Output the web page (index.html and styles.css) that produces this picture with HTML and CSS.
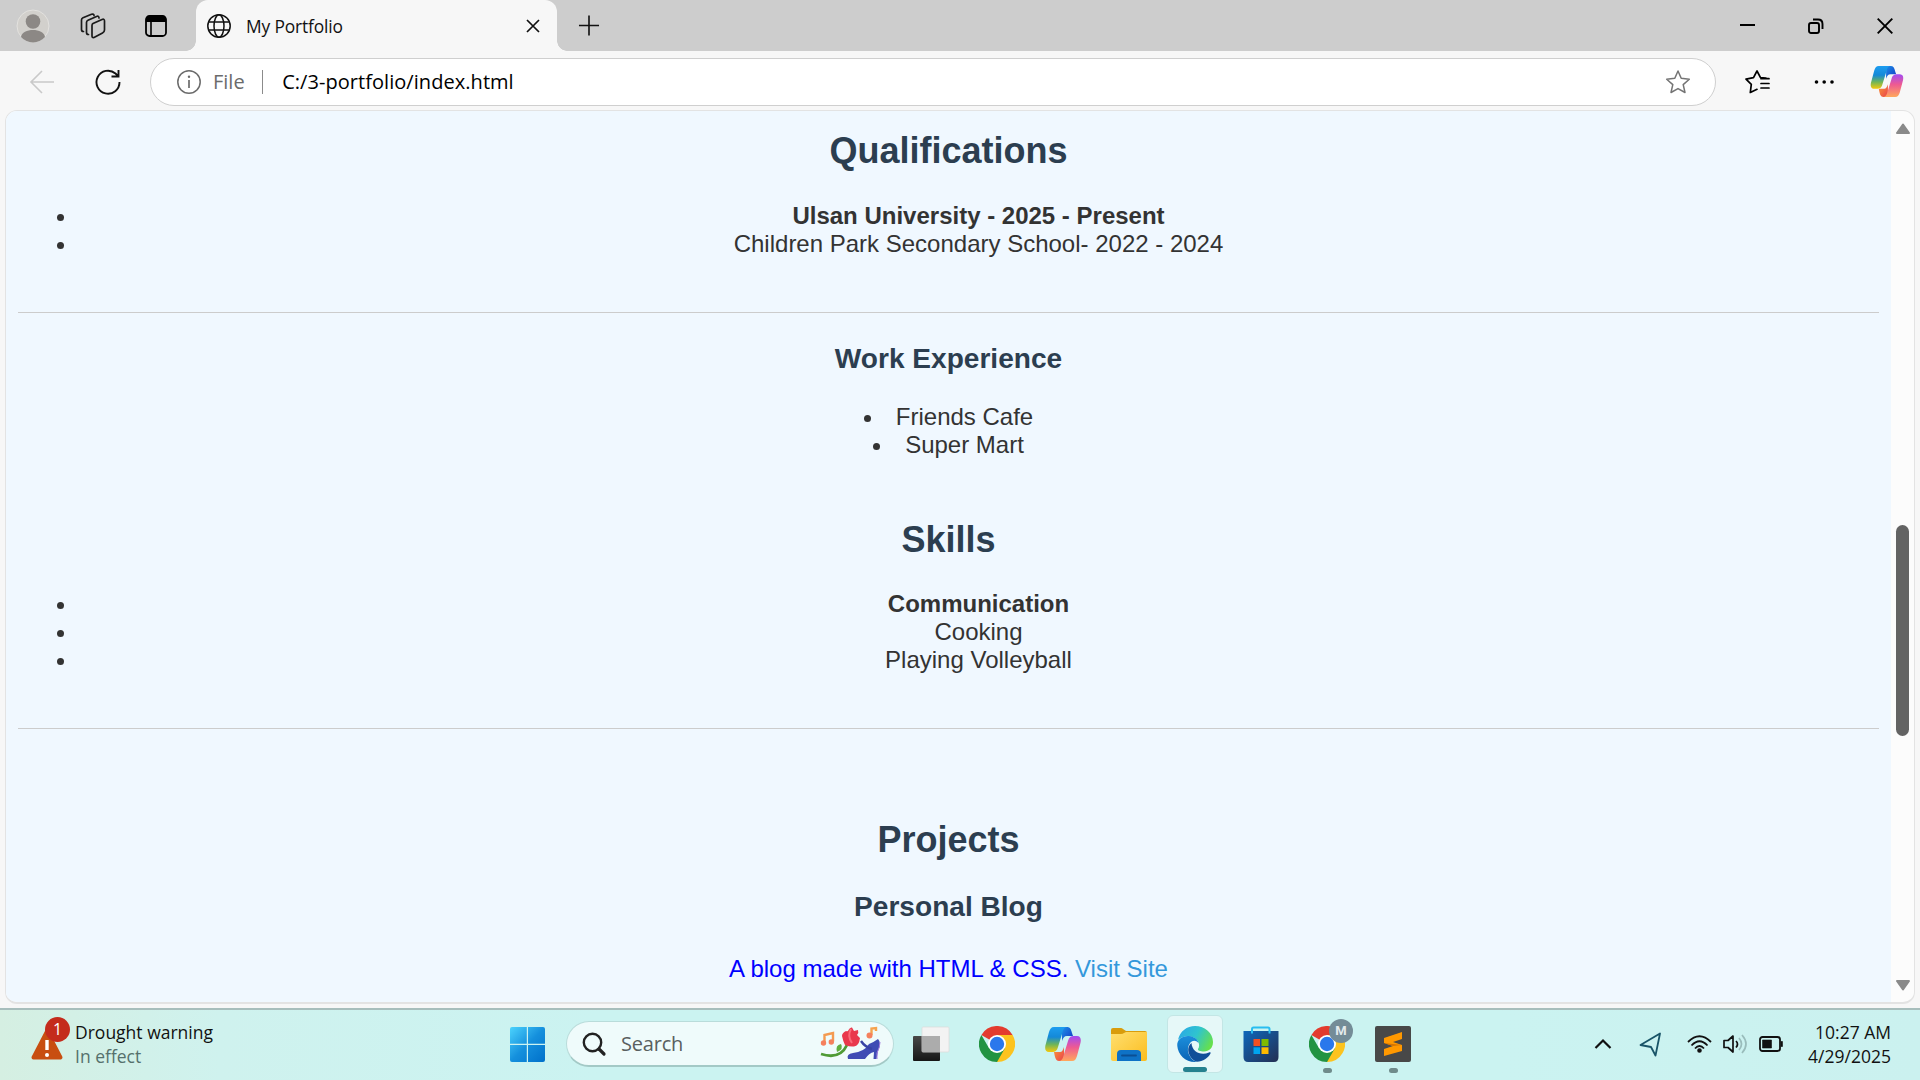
FILE: index.html
```html
<!DOCTYPE html>
<html lang="en">
<head>
<meta charset="utf-8">
<title>My Portfolio</title>
<link rel="stylesheet" href="styles.css">
</head>
<body>
<svg class="defs" width="0" height="0" aria-hidden="true">
  <defs>
    <linearGradient id="cpA" x1="0" y1="0" x2="0" y2="1"><stop offset="0" stop-color="#1d9df0"/><stop offset=".4" stop-color="#1489d8"/><stop offset=".7" stop-color="#6fb558"/><stop offset="1" stop-color="#f5c90c"/></linearGradient>
    <linearGradient id="cpB" x1="0" y1="0" x2="0" y2="1"><stop offset="0" stop-color="#a24bf3"/><stop offset=".45" stop-color="#ee5a92"/><stop offset="1" stop-color="#ffa85c"/></linearGradient>
    <linearGradient id="cpC" x1="0" y1="0" x2="1" y2="1"><stop offset="0" stop-color="#1b8fe8"/><stop offset="1" stop-color="#1437c4"/></linearGradient>
    <linearGradient id="cpD" x1="0" y1="0" x2="1" y2="1"><stop offset="0" stop-color="#fb9b35"/><stop offset="1" stop-color="#e9424d"/></linearGradient>
    <linearGradient id="win" x1="0" y1="0" x2="1" y2="1"><stop offset="0" stop-color="#4cd3fd"/><stop offset=".5" stop-color="#1590dd"/><stop offset="1" stop-color="#0070ca"/></linearGradient>
    <linearGradient id="fold" x1="0" y1="0" x2="1" y2="1"><stop offset="0" stop-color="#ffdf70"/><stop offset="1" stop-color="#fbbd1e"/></linearGradient>
    <linearGradient id="edgeTop" x1="0" y1=".2" x2="1" y2=".6"><stop offset="0" stop-color="#2aa8e6"/><stop offset=".5" stop-color="#2fc4cf"/><stop offset="1" stop-color="#66e04c"/></linearGradient>
    <linearGradient id="edgeMid" x1="0" y1="0" x2="0" y2="1"><stop offset="0" stop-color="#1b8fdc"/><stop offset="1" stop-color="#0a62b4"/></linearGradient>
    <linearGradient id="store" x1="0" y1="0" x2="1" y2="1"><stop offset="0" stop-color="#0d67bb"/><stop offset="1" stop-color="#242f52"/></linearGradient>
    <linearGradient id="tvA" x1="0" y1="0" x2="0" y2="1"><stop offset="0" stop-color="#484848"/><stop offset="1" stop-color="#161616"/></linearGradient>
    <symbol id="copilot" viewBox="0 0 36 34">
      <path d="M17 0H22C25 0 26 2 27 6L28 9H22C19 9 18 11 17 14Z" fill="url(#cpC)"/>
      <path d="M19 34H14C11 34 10 31 9 25H15C17 25 18 23 19 20Z" fill="url(#cpD)"/>
      <path d="M9 0H22C19 0 18 3 17 7L13 20C12 24 10 25 7 25H4C0 25-.5 21 .8 17L4 5C5 2 6 0 9 0Z" fill="url(#cpA)"/>
      <path d="M27 34H14C17 34 18 31 19 27L23 14C24 10 26 9 29 9H32C36 9 36.500 13 35.200 17L32 29C31 32 30 34 27 34Z" fill="url(#cpB)"/>
    </symbol>
    <symbol id="chrome" viewBox="0 0 36 36">
      <path d="M2.400 9A18 18 0 0 1 33.600 9L18 18Z" fill="#e33b2e"/>
      <path d="M33.600 9A18 18 0 0 1 18 36L18 18 18 9Z" fill="#fcc31e"/>
      <path d="M2.400 9A18 18 0 0 0 18 36L25.800 22.500 18 18 10.200 22.500Z" fill="#229342"/>
      <path d="M18 9H33.600L25.800 22.500Z" fill="#fcc31e"/>
      <circle cx="18" cy="18" r="9" fill="#fff"/><circle cx="18" cy="18" r="7.200" fill="#2a78ec"/>
    </symbol>
  </defs>
</svg>

<header class="tabbar">
  <svg class="avatar" width="34" height="34" viewBox="0 0 34 34"><circle cx="17" cy="17" r="16" fill="#d2d0cc" stroke="#e3e2df"/><circle cx="17" cy="12.500" r="7.300" fill="#8c8885"/><path d="M5 28C6 18.500 28 18.500 29 28A16 16 0 0 1 5 28Z" fill="#8c8885"/></svg>
  <svg class="spaces" width="26" height="26" viewBox="0 0 26 26" fill="none" stroke="#1a1a1a" stroke-width="1.700" stroke-linejoin="round" stroke-linecap="round"><path d="M13 10.500 22 6.500Q24.500 5.500 24.500 8V17Q24.500 19 22.500 20L14 24.500Q12 25 12 23V12.500Q12 11 13 10.500ZM8.500 21.500Q6.500 21.500 6.500 19.500V9.500Q6.500 8 8 7.300L16.500 3.500Q19 2.500 19 5M3.500 18.500Q1.500 18.500 1.500 16.500V7Q1.500 5.500 3 4.800L11.500 1.300Q14 .5 14 2.500"/></svg>
  <svg class="actions" width="22" height="22" viewBox="0 0 22 22"><rect x="1" y="1" width="20" height="20" rx="3.500" fill="none" stroke="#000" stroke-width="1.800"/><path d="M1 6V4Q1 1 4 1H18Q21 1 21 4V7H1Z"/><path d="M6 6V21" stroke="#000" stroke-width="1.600"/></svg>
  <div class="tab">
    <svg width="24" height="24" viewBox="0 0 24 24" fill="none" stroke="#111" stroke-width="1.500"><circle cx="12" cy="12" r="11.200"/><ellipse cx="12" cy="12" rx="5" ry="11.200"/><path d="M2 8H22M2 16H22"/></svg>
    <span class="tab-title">My Portfolio</span>
    <svg class="tab-close" width="14" height="14" viewBox="0 0 14 14"><path d="M1 1 13 13M13 1 1 13" stroke="#111" stroke-width="1.700"/></svg>
  </div>
  <svg class="new-tab" width="22" height="22" viewBox="0 0 22 22"><path d="M11 .5V21.500M.5 11H21.500" stroke="#111" stroke-width="1.700"/></svg>
  <div class="window-buttons">
    <svg width="15" height="16" viewBox="0 0 15 16"><path d="M0 7H15" stroke="#000" stroke-width="2"/></svg>
    <svg width="16" height="16" viewBox="0 0 16 16" fill="none" stroke="#000" stroke-width="1.900"><rect x="1" y="5" width="10" height="10" rx="2"/><path d="M5 1.500H10Q14.500 1.500 14.500 6V11"/></svg>
    <svg width="16" height="16" viewBox="0 0 16 16"><path d="M.7.7 15.300 15.300M15.300.7.7 15.300" stroke="#000" stroke-width="1.900"/></svg>
  </div>
</header>

<nav class="toolbar">
  <svg class="back" width="24" height="24" viewBox="0 0 24 24" fill="none" stroke="#c9c9c9" stroke-width="1.600"><path d="M24 12H1.500M12 1 1 12 12 23"/></svg>
  <svg class="reload" width="26" height="26" viewBox="0 0 26 26" fill="none" stroke="#111" stroke-width="1.900"><path d="M24.500 13A11.500 11.500 0 1 1 20.500 4.500L23 7M23.500 1V7.500H16.500"/></svg>
  <div class="address">
    <svg width="24" height="24" viewBox="0 0 24 24"><circle cx="12" cy="12" r="11.200" fill="none" stroke="#6b6b6b" stroke-width="1.500"/><path d="M12 10V18" stroke="#6b6b6b" stroke-width="1.700"/><circle cx="12" cy="6.800" r="1.200" fill="#6b6b6b"/></svg>
    <span class="scheme">File</span>
    <span class="divider"></span>
    <span class="url">C:/3-portfolio/index.html</span>
    <svg class="star" width="26" height="26" viewBox="0 0 26 26"><path d="M13 2 16.200 9.300 24.300 10.200 18.200 15.600 20 23.500 13 19.600 6 23.500 7.800 15.600 1.700 10.200 9.800 9.300Z" fill="none" stroke="#747474" stroke-width="1.500" stroke-linejoin="round"/></svg>
  </div>
  <svg class="favs" width="26" height="26" viewBox="0 0 26 26" fill="none" stroke="#000" stroke-width="1.700" stroke-linejoin="round" stroke-linecap="round"><path d="M22 9 16.500 8.700 13 2 9.500 8.700 2 10.100 7.300 15.300 6.300 23.500 13 20.300M17 9.700H25M17 14.500H25M17 19H25"/></svg>
  <svg class="more" width="20" height="6" viewBox="0 0 20 6"><circle cx="2.500" cy="3" r="1.800"/><circle cx="10.200" cy="3" r="1.800"/><circle cx="18" cy="3" r="1.800"/></svg>
  <svg class="copilot" width="34" height="31"><use href="#copilot"/></svg>
</nav>

<div class="frame">
  <main class="page">
    <section class="block">
      <h2>Qualifications</h2>
      <ul class="wide-list first">
        <li><span><b>Ulsan University - 2025 - Present</b></span></li>
        <li><span>Children Park Secondary School- 2022 - 2024</span></li>
      </ul>
    </section>
    <section class="work">
      <h3>Work Experience</h3>
      <ul class="inner-list">
        <li>Friends Cafe</li>
        <li>Super Mart</li>
      </ul>
    </section>
    <section class="block">
      <h2>Skills</h2>
      <ul class="wide-list">
        <li><span><b>Communication</b></span></li>
        <li><span>Cooking</span></li>
        <li><span>Playing Volleyball</span></li>
      </ul>
    </section>
    <section class="projects">
      <h2>Projects</h2>
      <h3>Personal Blog</h3>
      <p>A blog made with HTML &amp; CSS. <a href="#">Visit Site</a></p>
    </section>
  </main>
  <div class="scrollbar">
    <svg width="16" height="12" viewBox="0 0 16 12"><path d="M8 1.500 14 10H2Z" fill="#8a8a8a" stroke="#8a8a8a" stroke-width="2" stroke-linejoin="round"/></svg>
    <div class="thumb"></div>
    <svg width="16" height="12" viewBox="0 0 16 12"><path d="M8 10.500 14 2H2Z" fill="#8a8a8a" stroke="#8a8a8a" stroke-width="2" stroke-linejoin="round"/></svg>
  </div>
</div>

<footer class="taskbar">
  <div class="weather">
    <div class="warning">
      <svg width="32" height="31" viewBox="0 0 32 31"><path d="M16 2.500 29.500 28.500H2.500Z" fill="#c84e10" stroke="#c84e10" stroke-width="4" stroke-linejoin="round"/><path d="M16 11V21" stroke="#fff" stroke-width="3.400"/><circle cx="16" cy="26" r="2" fill="#fff"/></svg>
      <span class="count">1</span>
    </div>
    <div class="weather-text"><span>Drought warning</span><span class="sub">In effect</span></div>
  </div>
  <svg class="start" width="35" height="35" viewBox="0 0 35 35"><path d="M2 0H16.800V16.800H0V2Q0 0 2 0ZM18 0H33Q35 0 35 2V16.800H18ZM0 18H16.800V35H2Q0 35 0 33ZM18 18H35V33Q35 35 33 35H18Z" fill="url(#win)"/></svg>
  <div class="search">
    <svg width="24" height="24" viewBox="0 0 24 24" fill="none" stroke="#222"><circle cx="10.500" cy="10.500" r="8.700" stroke-width="2.400"/><path d="M17 17 22 22" stroke-width="3.200" stroke-linecap="round"/></svg>
    <span>Search</span>
    <svg class="doodle" width="62" height="34" viewBox="0 0 62 34">
      <path d="M4.500 16V8L13 6V14.500" fill="none" stroke="#f49a50" stroke-width="2.400"/><circle cx="3.500" cy="16" r="2.700" fill="#f5805d"/><circle cx="11.300" cy="15" r="2.700" fill="#f5805d"/>
      <path d="M1 27Q20 33 27 18" fill="none" stroke="#4f9b35" stroke-width="2.800"/><path d="M17 25Q15 18 21 17Q24 22 17 25Z" fill="#5fae3e"/>
      <path d="M22 9Q22 6 26 4 28 5 28.500 3 30 0 32 .5L34 4 38 3Q39 6 37 8L40 11Q39 19 34 19.500 30 20 25 18 23 14 22 9Z" fill="#e9384c"/><path d="M31 2Q27 9 32 16" stroke="#fb6a78" stroke-width="2" fill="none"/>
      <path d="M51.500 8V1.500L56 1V4" fill="none" stroke="#f6a24d" stroke-width="2.400"/><circle cx="49.500" cy="8.500" r="3" fill="#f5805d"/>
      <path d="M28 32Q26 27 33 26 44 25 49 17 54 15 58 12 62 16 58 24L56.500 32H53.500L54 25Q49 26 45 32Z" fill="#3f4bb4"/><path d="M41 14Q45 20 52 22" fill="none" stroke="#3843a4" stroke-width="2.400"/><path d="M60 15Q60 20 57 26V32" fill="none" stroke="#a37bdd" stroke-width="1"/>
    </svg>
  </div>
  <div class="apps">
    <div class="app"><svg width="36" height="36" viewBox="0 0 36 36"><rect y="10" width="27" height="25" rx="1" fill="url(#tvA)"/><rect x="9" y="1" width="27" height="25" rx="1" fill="#f3f3f3" stroke="#dcdcdc" stroke-width=".8"/><path d="M9 10H27V26H9Z" fill="#acacac"/></svg></div>
    <div class="app"><svg width="36" height="36"><use href="#chrome"/></svg></div>
    <div class="app"><svg width="36" height="34"><use href="#copilot"/></svg></div>
    <div class="app"><svg width="36" height="36" viewBox="0 0 36 36"><path d="M0 4Q0 2 2 2H10Q11 2 12 3L15 5H34Q36 5 36 7V14H0Z" fill="#d99c0c"/><path d="M0 8H10Q12 8 13 7L15 6H36V33Q36 35 34 35H2Q0 35 0 33Z" fill="url(#fold)"/><path d="M6 35V28Q6 24 10 24H26Q30 24 30 28V35Z" fill="#0e72c6"/><path d="M11 29.500H25" stroke="#0a4f94" stroke-width="1.800" stroke-linecap="round"/></svg></div>
    <div class="app current"><svg width="36" height="36" viewBox="0 0 36 36"><path d="M1 14C3 5 10 0 18 0 28 0 36 7 36 16 36 22 32 25.500 27 25.500 23 25.500 20.500 24.500 21 23 24 19 21 12 14 10.500 8 9.500 3 12 1 14Z" fill="url(#edgeTop)"/><path d="M.3 20C-.5 13 6 9.500 12 10 18 10.500 21 14 21.500 17 17 12 12 16 11 22 10 28 15 35 20 35.900 9 37 1 29 .3 20Z" fill="url(#edgeMid)"/><path d="M14.500 17C8 22 12 33 20 35.800 26 35.500 31 32 33.500 27.500 34 26.500 33 26 32 26.500 24 30 15 26 14.500 17Z" fill="#104f99"/></svg></div>
    <div class="app"><svg width="36" height="36" viewBox="0 0 36 36"><path d="M9 7V3Q9 1.500 10.500 1.500H25Q26.500 1.500 26.500 3V7" fill="none" stroke="#29bdf0" stroke-width="2"/><path d="M.5 5H35.500V31Q35.500 36 31 36H5Q.5 36 .5 31Z" fill="url(#store)"/><path d="M9 7.500V5M26.500 7.500V5" stroke="#29bdf0" stroke-width="2"/><path d="M10.500 13H17V20H10.500Z" fill="#f25022"/><path d="M18.500 13H25.500V20H18.500Z" fill="#7fba00"/><path d="M10.500 21.300H17V28H10.500Z" fill="#00a4ef"/><path d="M18.500 21.300H25.500V28H18.500Z" fill="#ffb900"/></svg></div>
    <div class="app running"><svg width="36" height="36"><use href="#chrome"/></svg><span class="profile">M</span></div>
    <div class="app running"><svg width="36" height="36" viewBox="0 0 36 36"><rect width="36" height="36" rx="2" fill="#484848"/><path d="M27 6V13L18 16 27 19V25L9 30V23L18 20 9 17V12Z" fill="#ff9800"/><path d="M9 17 27 19 18 20Z" fill="#d67400"/></svg></div>
  </div>
  <div class="tray">
    <svg width="18" height="12" viewBox="0 0 18 12"><path d="M1.500 10 9 2.500 16.500 10" fill="none" stroke="#111" stroke-width="2.200"/></svg>
    <svg width="23" height="25" viewBox="0 0 23 25"><path d="M1.500 13 21 1.500 16.500 23.500 12 15Z" fill="none" stroke="#195468" stroke-width="1.800" stroke-linejoin="round"/></svg>
    <svg width="25" height="18" viewBox="0 0 25 18" fill="none" stroke="#111" stroke-width="1.800"><path d="M1 7Q12.500-4.500 24 7M4.500 10.500Q12.500 2 20.500 10.500M8 13.500Q12.500 8.500 17 13.500"/><circle cx="12.500" cy="15.500" r="1.400" fill="#111"/></svg>
    <svg width="25" height="20" viewBox="0 0 25 20" fill="none" stroke="#111" stroke-width="1.700"><path d="M1 6.500V13.500H5L10 18V2L5 6.500ZM13 7Q16 10 13 13.500" stroke-linejoin="round"/><path d="M16 4Q21 10 16 16M19 1Q27 10 19 19" stroke="#99bcbb"/></svg>
    <svg width="25" height="16" viewBox="0 0 25 16"><rect x="1" y="1" width="20" height="14" rx="2.500" fill="none" stroke="#111" stroke-width="1.800"/><path d="M3.500 4H12.500V12H3.500ZM22 5.500H23.500V10.500H22Z" fill="#111" stroke="#111" stroke-width=".6"/></svg>
    <div class="clock"><span>10:27 AM</span><span>4/29/2025</span></div>
  </div>
</footer>
</body>
</html>
```
FILE: styles.css
```css
* { box-sizing: border-box; }

body {
  margin: 0;
  width: 1920px;
  height: 1080px;
  overflow: hidden;
  display: flex;
  flex-direction: column;
  background: #f7f7f7;
  font-family: "Open Sans", "Noto Sans", sans-serif;
  color: #111;
}

svg { display: block; flex: none; overflow: visible; }
.defs { position: absolute; }

/* Tab strip */
.tabbar {
  flex: none;
  height: 51px;
  display: flex;
  align-items: center;
  background: #cdcdcd;
}
.avatar { margin-left: 16px; }
.spaces { margin-left: 30px; }
.actions { margin-left: 39px; }
.tab {
  position: relative;
  width: 361px;
  height: 51px;
  margin-left: 29px;
  padding: 0 17px 0 11px;
  display: flex;
  align-items: center;
  background: #f7f7f7;
  border-radius: 12px 12px 0 0;
}
.tab::before, .tab::after {
  content: "";
  position: absolute;
  bottom: 0;
  width: 10px;
  height: 10px;
}
.tab::before { left: -10px; background: radial-gradient(circle at 0 0, transparent 9.5px, #f7f7f7 10px); }
.tab::after { right: -10px; background: radial-gradient(circle at 100% 0, transparent 9.5px, #f7f7f7 10px); }
.tab-title { margin-left: 15px; font-size: 17.4px; letter-spacing: -0.15px; }
.tab-close { margin-left: auto; }
.new-tab { margin-left: 21px; padding-bottom: 1px; }
.window-buttons { margin: 0 27px 0 auto; display: flex; gap: 53px; }

/* Navigation bar */
.toolbar {
  flex: none;
  height: 59px;
  padding: 3px 16px 0 30px;
  display: flex;
  align-items: center;
}
.reload { margin-left: 41px; }
.address {
  width: 1566px;
  height: 48px;
  margin-left: 29px;
  padding: 0 24px 0 26px;
  display: flex;
  align-items: center;
  background: #fff;
  border: 1px solid #cfcfcf;
  border-radius: 24px;
  font-size: 20px;
}
.scheme { margin-left: 12px; padding-bottom: 2px; color: #6b6b6b; }
.divider { width: 1.5px; height: 24px; margin-left: 17px; background: #8b8b8b; }
.url { margin-left: 19px; padding-bottom: 2px; color: #000; letter-spacing: 0.05px; }
.star { margin-left: auto; }
.favs { margin-left: 28px; }
.more { margin-left: 44px; }
.copilot { margin: 0 0 1px auto; }

/* Web content */
.frame {
  flex: none;
  width: 1910px;
  height: 894px;
  margin-left: 5px;
  display: flex;
  overflow: hidden;
  border: 1px solid #e3e3e3;
  border-bottom-width: 2px;
  border-radius: 12px;
  background: #fcfcfc;
}
.page {
  width: 1885px;
  padding: 19px 12px 0;
  background: #f0f8ff;
  font: 24px/28px "Liberation Sans", Arial, sans-serif;
  text-align: center;
  color: #333;
  overflow: hidden;
}
h2, h3 { margin: 0; color: #2c3e50; }
h2 { font-size: 36px; line-height: 41px; }
h3 { font-size: 28.08px; line-height: 32px; }
ul { margin: 0; padding: 0; list-style: none; }
.block { padding-bottom: 54px; border-bottom: 1px solid #ccc; }
.wide-list { margin-top: 30px; padding-left: 39px; }
.wide-list.first { margin-top: 31px; }
.wide-list li { display: flex; align-items: center; gap: 14px; }
.wide-list span { flex: 1; }
.wide-list li::before, .inner-list li::before {
  content: "";
  width: 7px;
  height: 7px;
  margin-top: 2px;
  border-radius: 50%;
  background: #333;
}
.work { padding: 30px 0 60px; }
.inner-list { margin-top: 28px; }
.inner-list li { display: flex; align-items: center; justify-content: center; gap: 25px; }
.projects { padding-top: 90px; }
.projects h3 { margin-top: 31px; }
.projects p { margin: 32px 0 0; color: #00f; }
.projects a { color: #3498db; text-decoration: none; }

.scrollbar {
  flex: 1;
  padding: 12px 0 11px;
  display: flex;
  flex-direction: column;
  align-items: center;
}
.thumb { width: 13px; height: 211px; margin: 390px 0 auto; border-radius: 7px; background: #636363; }

/* Taskbar */
.taskbar {
  flex: none;
  height: 72px;
  margin-top: 4px;
  padding-bottom: 2px;
  display: flex;
  align-items: center;
  border-top: 2px solid #a7bebc;
  background: linear-gradient(90deg, #d5efe2 0, #cff2ee 220px, #cbf3f1 600px, #cbf3f1 1500px, #cbf1ef 100%);
}
.weather { width: 479px; padding-left: 31px; display: flex; gap: 12px; }
.warning { position: relative; padding-top: 9px; }
.count {
  position: absolute;
  left: 14px;
  top: -3px;
  width: 25px;
  height: 25px;
  border-radius: 50%;
  background: #c42b1c;
  color: #fff;
  font-size: 16px;
  line-height: 24px;
  text-align: center;
}
.weather-text { display: flex; flex-direction: column; font-size: 17.5px; line-height: 24px; }
.sub { color: #55706c; }
.start { margin-left: 31px; }
.search {
  width: 328px;
  height: 46px;
  margin-left: 21px;
  padding: 0 11px 0 15px;
  display: flex;
  align-items: center;
  border: 1px solid #b9dcda;
  border-bottom: 2px solid #a3c9c6;
  border-radius: 23px;
  background: #effbfb;
  font-size: 20px;
  color: #595f5f;
}
.search span { margin-left: 15px; letter-spacing: -0.2px; }
.doodle { margin-left: auto; }
.apps { margin-left: 9px; display: flex; gap: 10px; }
.app {
  position: relative;
  width: 56px;
  height: 58px;
  display: flex;
  align-items: center;
  justify-content: center;
  border-radius: 6px;
}
.current { background: #e6f8f8; border: 1px solid #c3e6e5; }
.current::after, .running::after {
  content: "";
  position: absolute;
  bottom: 0;
  width: 24px;
  height: 5px;
  border-radius: 3px;
  background: #25818f;
}
.running::after { width: 9px; background: #6f8b8b; }
.profile {
  position: absolute;
  left: 30px;
  top: 4px;
  width: 24px;
  height: 24px;
  border-radius: 50%;
  background: #748c97;
  color: #e4eaec;
  font: bold 13px/24px Roboto, sans-serif;
  text-align: center;
}
.tray { margin: 0 29px 0 auto; display: flex; align-items: center; }
.tray svg:nth-child(2) { margin-left: 27px; }
.tray svg:nth-child(3) { margin-left: 25px; }
.tray svg:nth-child(4) { margin-left: 11px; }
.tray svg:nth-child(5) { margin-left: 11px; }
.clock {
  width: 107px;
  display: flex;
  flex-direction: column;
  font-size: 17.5px;
  line-height: 24px;
  text-align: right;
}
```
